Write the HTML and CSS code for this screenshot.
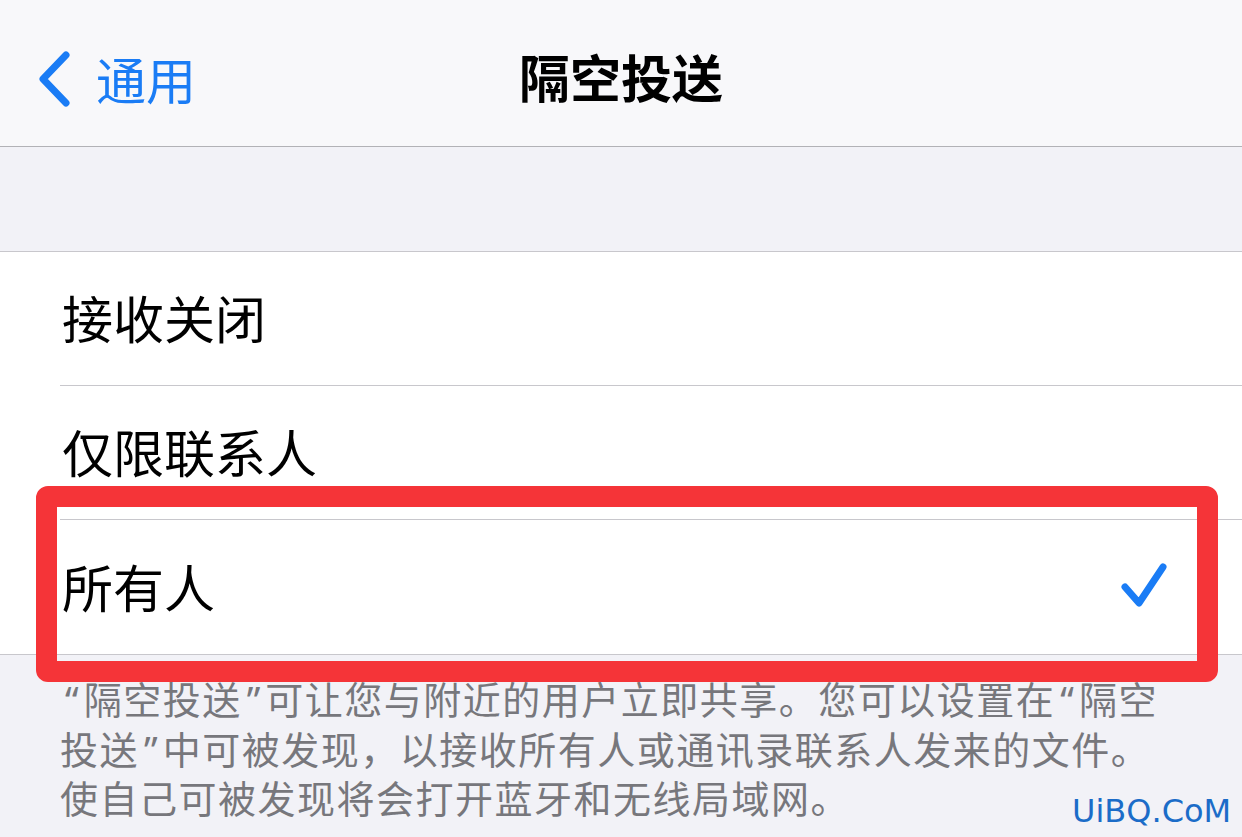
FILE: index.html
```html
<!DOCTYPE html>
<html lang="zh-CN">
<head>
    <meta charset="utf-8">
    <title>隔空投送</title>
    <link rel="stylesheet" href="styles.css">
</head>
<body>
    <div class="screen">
        <header class="navbar">
            <a class="back">
                <svg class="chevron" width="36" height="56" viewBox="0 0 36 56">
                    <path d="M30 4 L7 28 L30 52" fill="none" stroke="#1a7cf5" stroke-width="7" stroke-linecap="round" stroke-linejoin="round"/>
                </svg>
                <span class="back-text">通用</span>
            </a>
            <h1 class="title">隔空投送</h1>
        </header>

        <div class="spacer"></div>

        <ul class="options">
            <li class="option">接收关闭</li>
            <li class="option">仅限联系人</li>
            <li class="option selected">
                <span>所有人</span>
                <svg class="check" width="48" height="48" viewBox="0 0 48 48">
                    <path d="M5 26 L19 42 L43 6" fill="none" stroke="#1a7cf5" stroke-width="7" stroke-linecap="round" stroke-linejoin="round"/>
                </svg>
            </li>
        </ul>

        <p class="footnote"><span class="q">“</span>隔空投送<span class="q">”</span>可让您与附近的用户立即共享。您可以设置在<span class="q">“</span>隔空<br>投送<span class="q">”</span>中可被发现，以接收所有人或通讯录联系人发来的文件。<br>使自己可被发现将会打开蓝牙和无线局域网。</p>

        <!-- highlight drawn over the last option -->
        <div class="highlight"></div>
        <div class="watermark">UiBQ.CoM</div>
    </div>
</body>
</html>
```

FILE: styles.css
```css
body {
    margin: 0;
    background: #f2f2f7;
    font-family: "Noto Sans CJK SC", "Noto Sans", sans-serif;
    color: #000;
}
.screen {
    position: relative;
    width: 1242px;
    height: 837px;
    overflow: hidden;
    background: #f2f2f7;
}
.navbar {
    position: relative;
    height: 146px;
    background: #f8f8fa;
    border-bottom: 1px solid #b2b2b6;
    display: flex;
    align-items: center;
    justify-content: center;
}
.back {
    position: absolute;
    left: 36px;
    top: 51px;
    display: flex;
    align-items: center;
    color: #1a7cf5;
}
.chevron {
    display: block;
}
.back-text {
    font-size: 50px;
    line-height: 56px;
    margin-left: 24px;
    margin-top: -2px;
}
.title {
    margin: 0;
    font-size: 51px;
    font-weight: 600;
    line-height: 60px;
    margin-top: 6px;
}
.spacer {
    height: 104px;
    border-bottom: 1px solid #c8c7cc;
}
.options {
    list-style: none;
    margin: 0;
    padding: 0 0 0 60px;
    background: #fff;
    border-bottom: 1px solid #c8c7cc;
}
.option {
    height: 134px;
    display: flex;
    align-items: center;
    justify-content: space-between;
    padding: 0 74px 3px 2px;
    box-sizing: border-box;
    font-size: 51px;
    border-bottom: 1px solid #c8c7cc;
}
.option:last-child {
    border-bottom: none;
}
.check {
    display: block;
    margin-top: -1px;
}
.footnote {
    margin: 0;
    padding: 19px 0 0 60px;
    font-size: 38px;
    line-height: 48.5px;
    letter-spacing: 1.5px;
    color: #77777c;
}
.q {
    font-family: "Noto Sans", sans-serif;
    letter-spacing: 0;
    padding: 0 5px;
}
.highlight {
    position: absolute;
    left: 36px;
    top: 486px;
    width: 1182px;
    height: 196px;
    box-sizing: border-box;
    border: 21px solid #f53438;
    border-radius: 12px;
}
.watermark {
    position: absolute;
    left: 1072px;
    top: 792px;
    font-family: "DejaVu Sans", sans-serif;
    font-size: 32px;
    color: #1b6cc8;
}
```
